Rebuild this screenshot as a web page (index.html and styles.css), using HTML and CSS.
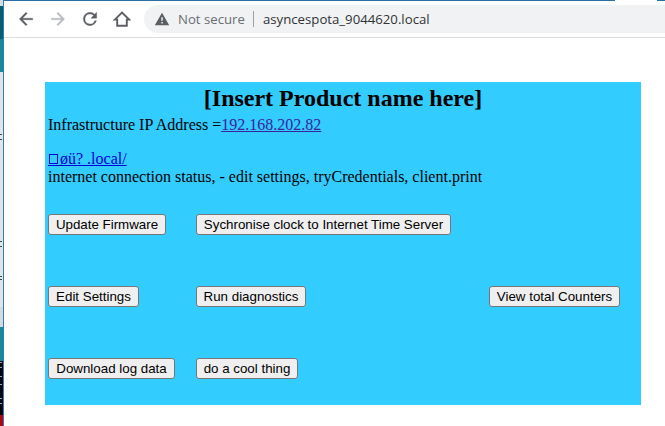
FILE: index.html
```html
<!DOCTYPE html>
<html lang="en">
<head>
<meta charset="utf-8">
<title>asyncespota_9044620.local</title>
<link rel="stylesheet" href="styles.css">
</head>
<body>
<aside class="behind">
  <div class="seg pale"></div>
  <div class="seg dark-teal"></div>
  <div class="seg teal"></div>
  <div class="seg sheet"><i class="mark m1"></i><i class="mark m2"></i><i class="mark m3"></i></div>
  <div class="seg grey"></div>
  <div class="seg teal"></div>
  <div class="seg console"><i class="mark c1"></i><i class="mark c2"></i><i class="mark c3"></i><i class="mark c4"></i></div>
  <div class="seg red"></div>
</aside>
<div class="window">
  <div class="tabline"><span class="line"></span><span class="tab"></span><span class="line-end"></span></div>
  <header class="toolbar">
    <svg class="icon" viewBox="0 0 24 24"><path d="M20 11H7.83l5.59-5.59L12 4l-8 8 8 8 1.41-1.41L7.83 13H20v-2z"/></svg>
    <svg class="icon disabled" viewBox="0 0 24 24"><path d="M12 4l-1.41 1.41L16.17 11H4v2h12.17l-5.58 5.59L12 20l8-8z"/></svg>
    <svg class="icon" viewBox="0 0 24 24"><path d="M17.65 6.35A7.96 7.96 0 0 0 12 4a8 8 0 1 0 7.73 10h-2.08A6 6 0 1 1 12 6c1.66 0 3.14.69 4.22 1.78L13 11h7V4l-2.35 2.35z"/></svg>
    <svg class="icon home" viewBox="0 0 18 18"><path d="M1.8 9.6 9 2.6l7.2 7H13.8v6.2H4.2V9.6z"/></svg>
    <div class="address">
      <svg class="warning" viewBox="0 0 16 14"><path fill-rule="evenodd" d="M8 .7 15.2 13.3H.8zM7.3 5.3v3.4h1.5V5.3zm0 4.6v1.5h1.5V9.9z"/></svg>
      <span class="security">Not secure</span>
      <span class="divider"></span>
      <span class="url">asyncespota_9044620.local</span>
    </div>
  </header>
  <main class="page">
    <section class="panel">
      <h1>[Insert Product name here]</h1>
      <p class="ip">Infrastructure IP Address =<a class="visited" href="#">192.168.202.82</a></p>
      <p><a href="#"><span class="missing"></span>øü? .local/</a></p>
      <p>internet connection status, - edit settings, tryCredentials, client.print</p>
      <div class="actions">
        <button class="w118">Update Firmware</button>
        <button class="w255">Sychronise clock to Internet Time Server</button>
        <span></span>
        <button class="w91">Edit Settings</button>
        <button class="w110">Run diagnostics</button>
        <button class="w131">View total Counters</button>
        <button class="w127">Download log data</button>
        <button class="w102">do a cool thing</button>
      </div>
    </section>
  </main>
</div>
</body>
</html>
```
FILE: styles.css
```css
* { box-sizing: border-box; }
body { margin: 0; width: 665px; height: 426px; overflow: hidden; display: flex; background: #fff; }

.behind { width: 3px; display: flex; flex-direction: column; overflow: hidden; }
.seg { position: relative; flex: none; }
.pale { height: 6px; background: #d5dde2; }
.dark-teal { height: 33px; background: #04616b; }
.teal { height: 33px; background: #148894; }
.sheet { height: 235px; background: #e1e5e7; }
.grey { height: 20px; background: #d5dadd; }
.grey + .teal { height: 34px; }
.console { height: 54px; background: #02030b; }
.red { height: 11px; background: #ad0712; }
.mark { position: absolute; left: 0; width: 2px; height: 6px; border: solid #42494d; border-width: 1px 0; }
.m1 { top: 62px; }
.m2 { top: 169px; }
.m3 { top: 204px; height: 4px; }
.console .mark { border-color: #9ba1a6; }
.c1 { top: 1px; }
.console .c2 { top: 15px; height: 1px; border-bottom: 0; }
.console .c3 { top: 23px; height: 1px; border-bottom: 0; }
.c4 { top: 37px; }

.window { flex: 1; border-left: 1px solid #317cb6; }
.tabline { height: 1px; display: flex; }
.line { width: 611px; background: #2a6ea8; }
.tab { width: 42px; }
.line-end { flex: 1; background: #2a6ea8; }

.toolbar { height: 37px; display: flex; align-items: center; padding-left: 12px; gap: 12px; border-bottom: 1px solid #dadce0; font-family: "Open Sans", "Noto Sans", sans-serif; }
.icon { width: 20px; height: 20px; flex: none; fill: #5b5e62; stroke: #5b5e62; stroke-width: .4; }
.disabled { fill: #b9bbbe; stroke: #b9bbbe; }
.home { width: 18px; height: 18px; margin: 0 1px; fill: none; stroke: #5b5e62; stroke-width: 1.9; }
.address { flex: 1; height: 28px; background: #f0f2f4; border-radius: 14px 0 0 14px; display: flex; align-items: center; padding-left: 10px; }
.warning { width: 16px; height: 14px; fill: #5b5e62; flex: none; }
.security { margin-left: 8px; width: 67px; font-size: 13.2px; line-height: 20px; color: #6a6d71; white-space: nowrap; }
.divider { width: 1px; height: 16px; margin: 0 9px 0 8px; background: #9da0a3; }
.url { font-size: 13.2px; line-height: 20px; color: #303236; white-space: nowrap; }

.page { padding: 44px 24px 0 41px; }
.panel { height: 323px; padding: 3px; background: #3cf; font: 16px/18px "Liberation Serif", serif; color: #000; }
h1 { margin: 0; font-size: 24px; line-height: 27px; text-align: center; }
p { margin: 0; white-space: nowrap; }
.ip { margin: 4px 0 16px; }
a { color: #0000d8; }
.visited { color: #3a22a0; }
.missing { position: relative; display: inline-block; width: 9px; height: 10px; margin: 0 2px 0 1px; border: 1px solid #0000d8; }
.missing::after { content: ""; position: absolute; left: -2px; top: 10px; width: 12px; height: 1px; background: #0000d8; }
.actions { display: grid; grid-template-columns: 148px 293px 1fr; grid-auto-rows: 72px; align-items: start; justify-items: start; margin-top: 28px; }
button { height: 21px; padding: 0; border: 1px solid #767676; border-radius: 3px; background: #efefef; font: 13.33px/19px "Liberation Sans", sans-serif; color: #000; white-space: nowrap; }
.w118 { width: 118px; }
.w255 { width: 255px; }
.w91 { width: 91px; }
.w110 { width: 110px; }
.w131 { width: 131px; }
.w127 { width: 127px; }
.w102 { width: 102px; }
```
